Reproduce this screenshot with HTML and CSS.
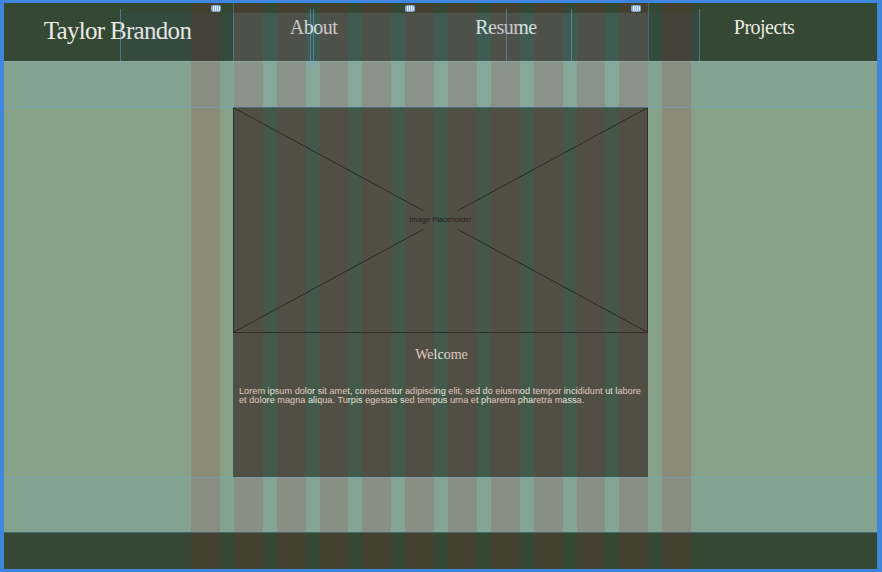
FILE: index.html
```html
<!DOCTYPE html>
<html lang="en">
<head>
<meta charset="utf-8">
<title>Taylor Brandon</title>
<link rel="stylesheet" href="styles.css">
</head>
<body>
<div class="frame">
  <header class="topbar">
    <div class="logo">Taylor Brandon</div>
    <a class="nav-link" href="#">About</a>
    <a class="nav-link" href="#">Resume</a>
    <a class="nav-link nav-last" href="#">Projects</a>
  </header>

  <main class="main">
    <div class="band">
      <section class="content">
        <div class="image">
          <svg class="image-x" viewBox="0 0 413 224" width="413" height="224">
            <line x1="0" y1="0" x2="189" y2="102.5"/>
            <line x1="224" y1="121.5" x2="413" y2="224"/>
            <line x1="0" y1="224" x2="189" y2="121.5"/>
            <line x1="224" y1="102.5" x2="413" y2="0"/>
          </svg>
          <span class="image-label">Image Placeholder</span>
        </div>
        <div class="card">
          <h1 class="card-title">Welcome</h1>
          <p class="card-text">Lorem ipsum dolor sit amet, consectetur adipiscing elit, sed do eiusmod tempor incididunt ut labore et dolore magna aliqua. Turpis egestas sed tempus urna et pharetra pharetra massa.</p>
        </div>
      </section>
    </div>
  </main>

  <footer class="footer"></footer>

  <div class="overlay" aria-hidden="true">
    <div class="zone zone-nav"></div>
    <div class="zone zone-top"></div>
    <div class="zone zone-bottom"></div>
    <div class="columns">
      <span></span><span></span><span></span><span></span><span></span><span></span>
      <span></span><span></span><span></span><span></span><span></span><span></span>
    </div>
    <div class="hline h1"></div>
    <div class="hline h2"></div>
    <div class="hline h3"></div>
    <div class="hline h4"></div>
    <div class="vline v1"></div>
    <div class="vline v2"></div>
    <div class="vline v3"></div>
    <div class="vline v4"></div>
    <div class="vline v5"></div>
    <div class="vline v6"></div>
    <div class="vline edge e1"></div>
    <div class="vline edge e2"></div>
    <div class="badge b1"></div>
    <div class="badge b2"></div>
    <div class="badge b3"></div>
  </div>
</div>
</body>
</html>
```

FILE: styles.css
```css
* { box-sizing: border-box; }

html, body {
  margin: 0;
  padding: 0;
  width: 882px;
  height: 572px;
  overflow: hidden;
  background: #3d86dc;
}

.frame {
  position: relative;
  width: 882px;
  height: 572px;
  border-style: solid;
  border-color: #3d86dc;
  border-width: 3px 5px 3px 4px;
  display: flex;
  flex-direction: column;
  background: #344834;
}

/* ---------- header ---------- */
.topbar {
  height: 58px;
  flex: none;
  display: grid;
  grid-template-columns: 227px 165px 220px 35px 226px;
  align-items: start;
  background: #344834;
  font-family: "Liberation Serif", "Times New Roman", serif;
  color: #ebebe3;
}

.logo {
  justify-self: center;
  padding-top: 13px;
  font-size: 25px;
  line-height: 30px;
  letter-spacing: -0.7px;
  white-space: nowrap;
}

.nav-link {
  justify-self: center;
  padding-top: 12px;
  font-size: 20px;
  line-height: 24px;
  letter-spacing: -0.5px;
  color: #ebebe3;
  text-decoration: none;
  white-space: nowrap;
}

.nav-last { grid-column: 5; }

/* ---------- main ---------- */
.main {
  height: 471px;
  flex: none;
  padding: 46px 0 55px;
  background: #84a290;
}

.band {
  height: 370px;
  background: #87a088;
}

.content {
  width: 415px;
  height: 370px;
  margin: 0 auto;
  display: flex;
  flex-direction: column;
}

.image {
  position: relative;
  height: 226px;
  flex: none;
  border: 1px solid #27302a;
  background: #44584a;
  display: flex;
  align-items: center;
  justify-content: center;
}

.image-x {
  position: absolute;
  left: 0;
  top: 0;
  width: 413px;
  height: 224px;
}

.image-x line {
  stroke: #222923;
  stroke-width: 1;
}

.image-label {
  position: relative;
  font-family: "Liberation Sans", Arial, sans-serif;
  font-size: 7.5px;
  line-height: 9px;
  color: #1c1e1a;
  margin-top: -1px;
}

.card {
  flex: 1;
  background: #43594a;
  padding: 13px 4px 0 6px;
}

.card-title {
  margin: 0;
  text-align: center;
  font-family: "Liberation Serif", "Times New Roman", serif;
  font-weight: normal;
  font-size: 14px;
  line-height: 18px;
  color: #e6e4da;
}

.card-text {
  margin: 23px 0 0;
  font-family: "Liberation Sans", Arial, sans-serif;
  font-size: 9.2px;
  line-height: 9px;
  color: #e6e4da;
}

/* ---------- footer ---------- */
.footer {
  flex: 1;
  background: #344834;
}

/* ---------- design-tool overlay ---------- */
.overlay {
  position: absolute;
  inset: 0;
  pointer-events: none;
}

.zone {
  position: absolute;
}

.zone-nav {
  left: 116px;
  top: 10px;
  width: 579px;
  height: 48px;
  background: rgba(80, 140, 230, 0.06);
}

.zone-top {
  left: 229px;
  top: 10px;
  width: 415px;
  height: 94px;
  background: rgba(140, 210, 230, 0.12);
}

.zone-bottom {
  left: 229px;
  top: 474px;
  width: 415px;
  height: 55px;
  background: rgba(140, 210, 230, 0.08);
}

.columns {
  position: absolute;
  left: 187px;
  top: 0;
  bottom: 0;
  width: 500px;
  display: grid;
  grid-template-columns: repeat(12, 1fr);
  column-gap: 14px;
}

.columns span {
  background: rgba(160, 28, 31, 0.15);
}

.hline {
  position: absolute;
  left: 0;
  right: 0;
  height: 1px;
}

.h1 { top: 58px; background: rgba(150, 190, 200, 0.35); }
.h2 { top: 104px; background: rgba(100, 170, 215, 0.5); }
.h3 { top: 474px; background: rgba(100, 170, 215, 0.45); }
.h4 { top: 529px; background: rgba(90, 150, 190, 0.45); }

.vline {
  position: absolute;
  width: 1px;
  top: 6px;
  height: 57px;
  background: rgba(100, 165, 225, 0.5);
}

.v1 { left: 116px; }
.v2 { left: 306px; }
.v3 { left: 309px; }
.v4 { left: 502px; }
.v5 { left: 567px; }
.v6 { left: 695px; }

.edge {
  top: 0;
  height: 58px;
  background: rgba(100, 165, 225, 0.35);
}

.e1 { left: 229px; }
.e2 { left: 644px; }

.badge {
  position: absolute;
  width: 8px;
  height: 5px;
  border-radius: 1px;
  background:
    repeating-linear-gradient(90deg, #8fb2e0 0 1px, #e8eef8 1px 2px);
  box-shadow: 0 0 0 1px #7ea4d8;
}

.b1 { left: 208px; top: 3px; }
.b2 { left: 402px; top: 3px; }
.b3 { left: 628px; top: 3px; }
```
